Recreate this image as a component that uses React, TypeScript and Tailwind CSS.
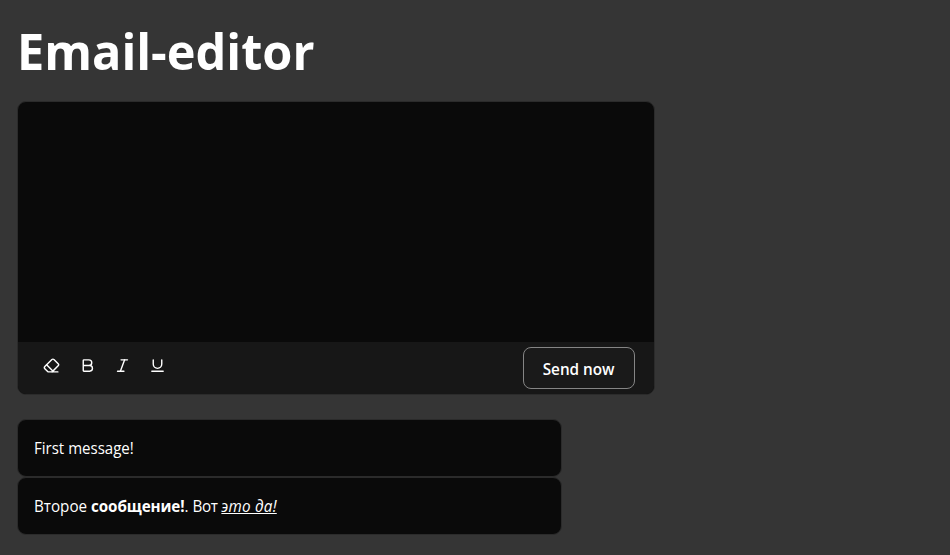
import { Eraser, Bold, Italic, Underline } from "lucide-react";

export default function App() {
  return (
    <main className="h-[555px] w-[950px] overflow-hidden bg-[#353535] px-[17px] pt-[18px] font-['Open_Sans','Noto_Sans',sans-serif] text-[16px] text-white">
      <h1 className="h-[83px] whitespace-nowrap text-[51px] leading-[64px] font-bold">
        <span className="inline-block origin-left scale-x-[0.954]">Email-editor</span>
      </h1>
      <section className="h-[294px] w-[638px] overflow-hidden rounded-[9px] border border-[#2b2b2b] bg-[#0a0a0a]">
        <div className="h-[240px]" contentEditable suppressContentEditableWarning />
        <div className="flex h-[52px] items-start justify-between bg-[#171717] pt-[5px] pr-[19px] pl-[25px]">
          <div className="flex gap-[18px] pt-[10px]">
            <Eraser size={17} className="mr-px" />
            <Bold size={17} />
            <Italic size={17} />
            <Underline size={17} />
          </div>
          <button className="h-[42px] w-[112px] rounded-[8px] border border-[#858585] bg-[#1a1a1a] pt-px font-semibold">
            <span className="inline-block scale-x-[0.955]">Send now</span>
          </button>
        </div>
      </section>
      <div className="mt-[24px] flex w-[545px] flex-col">
        <p className="h-[58px] rounded-[9px] border border-[#2b2b2b] bg-[#0a0a0a] px-4 leading-[56px]">
          <span className="inline-block origin-left scale-x-[0.94]">First message!</span>
        </p>
        <p className="h-[58px] rounded-[9px] border border-[#2b2b2b] bg-[#0a0a0a] px-4 leading-[56px]">
          <span className="inline-block origin-left scale-x-[0.95]">
            Второе <b className="tracking-[-0.1px]">сообщение!</b>. <span className="tracking-[-0.3px]">Вот </span>
            <i className="tracking-[0.25px]"><u>это да!</u></i>
          </span>
        </p>
      </div>
    </main>
  );
}
